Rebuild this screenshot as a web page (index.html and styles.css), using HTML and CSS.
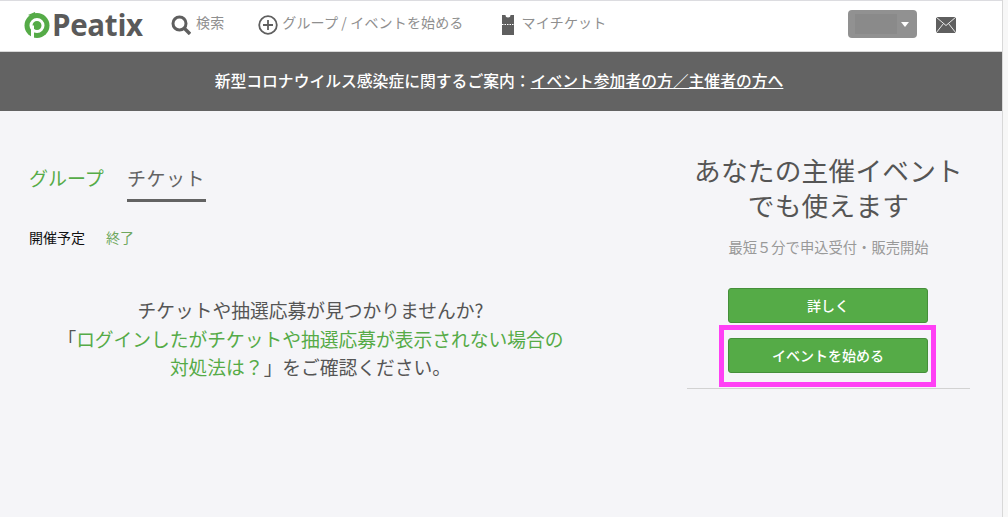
FILE: index.html
```html
<!DOCTYPE html>
<html lang="ja">
<head>
<meta charset="utf-8">
<title>Peatix</title>
<link rel="stylesheet" href="styles.css">
</head>
<body>
<div class="page">
  <header class="topbar">
    <a class="logo">
      <svg class="logo-mark" width="26" height="27" viewBox="0 0 26 27">
        <circle cx="13" cy="13.500" r="12.500" fill="#55ab47"/>
        <path d="M4 3l7-3 1 6z" fill="#55ab47"/>
        <circle cx="13" cy="13.500" r="6" fill="none" stroke="#fff" stroke-width="3"/>
        <path d="M8.500 13.500V27" stroke="#fff" stroke-width="3"/>
      </svg>
      <span class="logo-text">Peatix</span>
    </a>
    <a class="nav-item nav-search">
      <svg width="20" height="20" viewBox="0 0 20 20"><circle cx="8.500" cy="8.500" r="6.500" fill="none" stroke="#5f5f5f" stroke-width="3"/><path d="M13 13l6 6" stroke="#5f5f5f" stroke-width="3.400"/></svg>
      <span class="nav-label">検索</span>
    </a>
    <a class="nav-item nav-start">
      <svg width="20" height="20" viewBox="0 0 20 20"><circle cx="10" cy="10" r="8.800" fill="none" stroke="#5f5f5f" stroke-width="1.800"/><path d="M10 5v10M5 10h10" stroke="#5f5f5f" stroke-width="1.800"/></svg>
      <span class="nav-label">グループ / イベントを始める</span>
    </a>
    <a class="nav-item nav-ticket">
      <svg width="12" height="20" viewBox="0 0 12 20"><path d="M0 0h3.500a2.500 2.500 0 0 0 5 0H12v20H0z" fill="#5f5f5f"/><path d="M0 9.500h12" stroke="#fff" stroke-width="1" stroke-dasharray="1.500 1"/></svg>
      <span class="nav-label">マイチケット</span>
    </a>
    <div class="account">
      <span class="account-name"></span>
      <span class="account-caret"></span>
    </div>
    <svg class="mail" width="20" height="16" viewBox="0 0 20 16"><rect width="20" height="16" fill="#5f5f5f"/><path d="M0 0l10 8.500L20 0M0 16l7.500-9.500M20 16l-7.500-9.500" fill="none" stroke="#e8e8e8" stroke-width="1"/></svg>
  </header>
  <div class="notice">新型コロナウイルス感染症に関するご案内：<a class="notice-link">イベント参加者の方／主催者の方へ</a></div>
  <main class="content">
    <section class="tickets">
      <nav class="tabs">
        <a class="tab">グループ</a>
        <a class="tab tab-active">チケット</a>
      </nav>
      <div class="filters">
        <span class="filter-current">開催予定</span>
        <a class="filter-link">終了</a>
      </div>
      <p class="empty">チケットや抽選応募が見つかりませんか?<br>「<a class="green">ログインしたがチケットや抽選応募が表示されない場合の<br>対処法は？</a>」をご確認ください。</p>
    </section>
    <aside class="promo">
      <h2 class="promo-title">あなたの主催イベント<br>でも使えます</h2>
      <p class="promo-sub">最短５分で申込受付・販売開始</p>
      <div class="promo-actions">
        <a class="btn">詳しく</a>
        <div class="highlighted">
          <a class="btn">イベントを始める</a>
          <span class="highlight-box"></span>
        </div>
      </div>
      <hr class="promo-rule">
    </aside>
  </main>
</div>
</body>
</html>
```
FILE: styles.css
```css
* { box-sizing: border-box; }
html, body { margin: 0; height: 100%; }
body {
  font-family: "Noto Sans CJK JP", "Liberation Sans", sans-serif;
  background: #f5f5f8;
  overflow: hidden;
}
.page {
  width: 1003px;
  height: 517px;
  border-right: 1px solid #d8d8d8;
  box-shadow: 5px 0 0 #f7f7f7;
  display: flex;
  flex-direction: column;
}
.topbar {
  height: 52px;
  flex: none;
  background: #fff;
  border-top: 1px solid #dcdce0;
  border-bottom: 1px solid #d8d8d8;
  display: flex;
  align-items: center;
  padding: 0 0 2px 24px;
}
.logo { display: flex; align-items: center; gap: 2px; margin-right: 28px; width: 119px; flex: none; }
.logo-mark { flex: none; }
.logo-text {
  font-family: "Open Sans", sans-serif;
  font-weight: 700;
  font-size: 29.500px;
  line-height: 30px;
  letter-spacing: -0.3px;
  color: #5a5a5a;
}
.nav-item {
  display: flex;
  align-items: center;
  font-size: 14px;
  line-height: 20px;
  color: #8f8f8f;
}
.nav-label { position: relative; top: -3px; letter-spacing: 0.150px; }
.nav-search { gap: 5px; margin-right: 34px; }
.nav-start { gap: 4px; margin-right: 39px; }
.nav-ticket { gap: 7px; }
.account {
  width: 69px;
  height: 28px;
  margin: -2px 19px 0 auto;
  background: #919191;
  border-radius: 4px;
  display: flex;
  align-items: center;
  padding-left: 7px;
}
.account-name { width: 42px; height: 20px; background: #8a8a8a; }
.account-caret {
  margin-left: 4px;
  margin-top: 1px;
  border-left: 4px solid transparent;
  border-right: 4px solid transparent;
  border-top: 5px solid #fff;
}
.mail { margin: -1px 46px 0 0; flex: none; }
.notice {
  height: 59px;
  flex: none;
  background: #636363;
  color: #fff;
  font-size: 15.800px;
  font-weight: 500;
  line-height: 57px;
  text-align: center;
  padding-right: 4px;
}
.notice-link { text-decoration: underline; }
.content { flex: 1; display: flex; }
.tickets { width: 687px; flex: none; padding: 51px 0 0 29px; }
.tabs { display: flex; gap: 22px; }
.tab {
  font-size: 19px;
  line-height: 32px;
  height: 40px;
  color: #55ab47;
  min-width: 76px;
}
.tab-active {
  color: #636363;
  border-bottom: 3px solid #636363;
  width: 79px;
  letter-spacing: 0.500px;
}
.filters { display: flex; gap: 21px; margin-top: 24px; font-size: 14px; line-height: 22px; }
.filter-current { color: #111; }
.filter-link { color: #6fa860; }
.empty {
  margin: 48px 0 0;
  width: 563px;
  text-align: center;
  font-size: 18.750px;
  line-height: 28.500px;
  color: #555;
}
.green { color: #55ab47; }
.promo { width: 283px; flex: none; padding-top: 41px; text-align: center; }
.promo-title {
  margin: 0;
  font-size: 26.700px;
  font-weight: 400;
  line-height: 35px;
  color: #555;
  letter-spacing: 0.200px;
}
.promo-sub { margin: 14px 0 0; font-size: 14.300px; line-height: 22px; color: #999; }
.promo-actions { margin: 30px 0 0 41px; width: 200px; display: flex; flex-direction: column; gap: 15px; }
.btn {
  display: block;
  height: 35px;
  background: #55ab47;
  border: 1px solid #458f3a;
  border-radius: 3px;
  color: #fff;
  font-size: 14px;
  font-weight: 500;
  line-height: 33px;
  text-align: center;
}
.highlighted { position: relative; }
.highlight-box {
  position: absolute;
  left: -9px;
  top: -13px;
  width: 217px;
  height: 62px;
  border: 5px solid #ff40f5;
}
.promo-rule { margin: 15px 0 0; border: 0; border-top: 1px solid #d2d2d2; }
```
